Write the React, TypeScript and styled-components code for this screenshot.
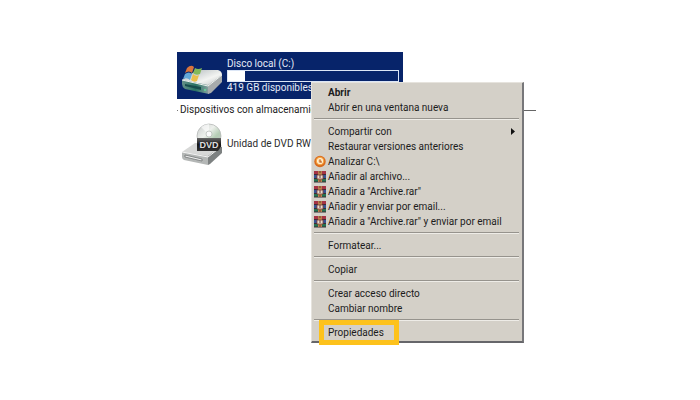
import React from "react";
import styled, { createGlobalStyle } from "styled-components";

const GlobalStyle = createGlobalStyle`
  *, *::before, *::after { box-sizing: border-box; }
  body {
    margin: 0;
    background: #fff;
    color: #1c1c1c;
    font-family: Roboto, "Liberation Sans", sans-serif;
    font-size: 10px;
    line-height: 15px;
  }
`;

const Page = styled.main`
  min-height: 100vh;
  padding: 52px 23% 52px 177px;
`;

const Explorer = styled.section`
  position: relative;
  width: 100%;
  max-width: 359px;
`;

const Drive = styled.div<{ $selected?: boolean }>`
  display: flex;
  align-items: center;
  gap: 4px;
  width: 226px;
  height: 47px;
  padding: 0 4px;
  white-space: nowrap;
  background: ${(p) => (p.$selected ? "#07246a" : "transparent")};
  color: ${(p) => (p.$selected ? "#e4eaf6" : "#2c2c2c")};
`;

const DriveInfo = styled.div`
  flex: 1;
  min-width: 0;
  line-height: 12px;
`;

const DriveIcon = styled.svg`
  flex: none;
  width: 42px;
  height: 42px;
`;

const UsageBar = styled.div`
  height: 12px;
  border: 1px solid #dce6f6;
`;

const Used = styled.div`
  height: 100%;
  background: #fff;
`;

const GroupHeading = styled.h2`
  display: flex;
  align-items: center;
  gap: 2px;
  margin: 3px 0 2px;
  font-size: 10px;
  font-weight: 400;
  line-height: 16px;
  white-space: nowrap;

  &::before {
    content: "";
    width: 1px;
    height: 1px;
    background: #777;
  }
  &::after {
    content: "";
    flex: 1;
    height: 1px;
    background: #666;
  }
`;

const Menu = styled.div`
  position: absolute;
  top: 30px;
  left: 134px;
  width: 213px;
  padding: 2px 3px 1px 2px;
  background: #d4d0c8;
  border: 1px solid;
  border-color: #e6e3dd #77777a #66666a #e6e3dd;
  border-right-width: 2px;
  border-bottom-width: 2px;
`;

const Item = styled.button<{ $bold?: boolean }>`
  position: relative;
  display: grid;
  grid-template-columns: 14px 1fr 8px;
  align-items: center;
  width: 100%;
  height: 15px;
  padding: 0;
  border: 0;
  background: none;
  color: inherit;
  font: inherit;
  font-weight: ${(p) => (p.$bold ? 700 : 400)};
  text-align: left;
  white-space: nowrap;
`;

const ItemIcon = styled.svg`
  display: block;
  width: 12px;
  height: 13px;
`;

const Arrow = styled.svg`
  width: 4px;
  height: 7px;
`;

const Separator = styled.hr`
  height: 2px;
  margin: 3px 0 4px;
  border: 0;
  border-top: 1px solid #96938d;
  border-bottom: 1px solid #eeece7;
`;

const Highlight = styled.span`
  position: absolute;
  top: -5px;
  left: 5px;
  width: 80px;
  height: 25px;
  border: 5px solid #fdc21c;
  pointer-events: none;
`;

const HardDisk = () => (
  <DriveIcon viewBox="0 0 42 42" aria-hidden="true">
    <defs>
      <linearGradient id="hdTop" x1="0" y1="0" x2="1" y2="1">
        <stop offset="0" stopColor="#a9b2b6" />
        <stop offset=".6" stopColor="#f3f4f2" />
        <stop offset="1" stopColor="#bcc0c1" />
      </linearGradient>
      <linearGradient id="hdFront">
        <stop offset="0" stopColor="#668f88" />
        <stop offset=".5" stopColor="#287463" />
        <stop offset="1" stopColor="#8ba3a3" />
      </linearGradient>
    </defs>
    <path d="M1 25 L16 15 L37 15 Q41 16 41 20 L27 31 Z" fill="url(#hdTop)" />
    <path d="M1 25 L27 30 L28 39 L4 34 Q1 32 1 29 Z" fill="url(#hdFront)" />
    <path d="M27 30 L41 20 V27 L30 38 L27 39 Z" fill="#a7abac" />
    <path d="M1 25 L27 31 L41 20" fill="none" stroke="#eef2ee" />
    <path d="M4 29 L20 32 V35 L4 31 Z" fill="#174d4c" />
    <circle cx="24" cy="35" r="1" fill="#65e19a" />
    <path d="M6 13 Q10 9 13 12 L11 18 Q8 15 4 18 Z" fill="#d9743c" />
    <path d="M14 13 Q17 15 21 13 L19 19 Q15 21 12 18 Z" fill="#83b95a" />
    <path d="M4 19 Q8 16 11 19 L9 25 Q6 22 2 24 Z" fill="#63a8d8" />
    <path d="M12 19 Q15 22 18 20 L16 26 Q13 28 10 25 Z" fill="#eac04c" />
  </DriveIcon>
);

const DvdDrive = () => (
  <DriveIcon viewBox="0 0 42 42" aria-hidden="true">
    <defs>
      <linearGradient id="disc" x1="0" y1="0" x2="1" y2="1">
        <stop offset="0" stopColor="#c9cccc" />
        <stop offset=".4" stopColor="#edf0ec" />
        <stop offset=".65" stopColor="#b5cdb5" />
        <stop offset="1" stopColor="#c1c1c5" />
      </linearGradient>
      <linearGradient id="dvdLabel" x1="0" y1="0" x2="0" y2="1">
        <stop offset="0" stopColor="#666" />
        <stop offset=".5" stopColor="#171717" />
        <stop offset="1" stopColor="#333" />
      </linearGradient>
    </defs>
    <path d="M1 29 L14 20 H38 L41 23 L27 34 Z" fill="#d7d8d7" />
    <path d="M1 29 L27 33 V42 L3 37 Q1 36 1 34 Z" fill="#b4b7b6" />
    <path d="M27 33 L41 23 V30 L29 41 L27 42 Z" fill="#7d8181" />
    <path d="M1 29 L27 34 L41 23" fill="none" stroke="#f4f4f4" />
    <path d="M4 32 L21 36 V38 L4 34 Z" fill="#f0f0f0" stroke="#646868" strokeWidth=".7" />
    <circle cx="28" cy="13" r="12" fill="url(#disc)" stroke="#b6b9b8" strokeWidth=".8" />
    <path d="M28 12 L20 4 Q24 1 28 1 Z" fill="#fff" opacity=".6" />
    <circle cx="28" cy="11" r="3" fill="#fafafa" stroke="#afb4b0" strokeWidth=".7" />
    <path d="M16 15 H40 V24 L37 28 H16 Z" fill="url(#dvdLabel)" />
    <text x="28" y="25" fill="#ddd" fontFamily="Liberation Sans, sans-serif" fontSize="9" fontWeight="700" textAnchor="middle">DVD</text>
  </DriveIcon>
);

const ScanIcon = () => (
  <ItemIcon viewBox="0 0 12 13" aria-hidden="true">
    <circle cx="6" cy="6.5" r="5.7" fill="#d96b1d" />
    <circle cx="6" cy="6" r="4.3" fill="#f6a544" />
    <circle cx="6" cy="6" r="2.5" fill="#fbd29a" stroke="#fff0d5" strokeWidth="1.2" />
    <path d="M6 4.5 V7 H8" fill="none" stroke="#b95518" strokeWidth="1.1" />
  </ItemIcon>
);

const ArchiveIcon = () => (
  <ItemIcon viewBox="0 0 12 13" aria-hidden="true">
    <rect y="1" width="12" height="4" fill="#a63345" />
    <rect y="5" width="12" height="3" fill="#375595" />
    <rect y="8" width="12" height="4" fill="#247451" />
    <path d="M0 4.5 H12 M0 8.5 H12 M0 12 H12" stroke="#3b2d35" />
    <rect x="4" y="1" width="4" height="11" fill="#b9834c" />
    <rect x="3" y="5" width="6" height="4" fill="#e6dfcf" stroke="#833b36" strokeWidth=".8" />
    <path d="M5 2 H7 M5 11 H7 M6 5 V8" stroke="#6b3430" />
  </ItemIcon>
);

type Entry = {
  label: string;
  icon?: "scan" | "archive";
  bold?: boolean;
  submenu?: boolean;
  highlighted?: boolean;
};

const groups: Entry[][] = [
  [{ label: "Abrir", bold: true }, { label: "Abrir en una ventana nueva" }],
  [
    { label: "Compartir con", submenu: true },
    { label: "Restaurar versiones anteriores" },
    { label: "Analizar C:\\", icon: "scan" },
    { label: "Añadir al archivo...", icon: "archive" },
    { label: 'Añadir a "Archive.rar"', icon: "archive" },
    { label: "Añadir y enviar por email...", icon: "archive" },
    { label: 'Añadir a "Archive.rar" y enviar por email', icon: "archive" },
  ],
  [{ label: "Formatear..." }],
  [{ label: "Copiar" }],
  [{ label: "Crear acceso directo" }, { label: "Cambiar nombre" }],
  [{ label: "Propiedades", highlighted: true }],
];

const MenuItem = ({ entry }: { entry: Entry }) => (
  <Item type="button" role="menuitem" $bold={entry.bold} aria-haspopup={entry.submenu ? "menu" : undefined}>
    <span>
      {entry.icon === "scan" && <ScanIcon />}
      {entry.icon === "archive" && <ArchiveIcon />}
    </span>
    <span>{entry.label}</span>
    {entry.submenu && (
      <Arrow viewBox="0 0 4 7" aria-hidden="true">
        <path d="M0 0 L4 3.5 L0 7 Z" fill="#111" />
      </Arrow>
    )}
    {entry.highlighted && <Highlight />}
  </Item>
);

export default function App() {
  return (
    <>
      <GlobalStyle />
      <Page>
        <Explorer>
          <Drive $selected>
            <HardDisk />
            <DriveInfo>
              <div>Disco local (C:)</div>
              <UsageBar role="progressbar" aria-label="Espacio usado" aria-valuenow={10}>
                <Used style={{ width: "10%" }} />
              </UsageBar>
              <div>419 GB disponibles</div>
            </DriveInfo>
          </Drive>
          <GroupHeading>Dispositivos con almacenamiento</GroupHeading>
          <Drive>
            <DvdDrive />
            <DriveInfo>Unidad de DVD RW</DriveInfo>
          </Drive>
          <Menu role="menu">
            {groups.map((group, index) => (
              <React.Fragment key={group[0].label}>
                {index > 0 && <Separator />}
                {group.map((entry) => (
                  <MenuItem key={entry.label} entry={entry} />
                ))}
              </React.Fragment>
            ))}
          </Menu>
        </Explorer>
      </Page>
    </>
  );
}
